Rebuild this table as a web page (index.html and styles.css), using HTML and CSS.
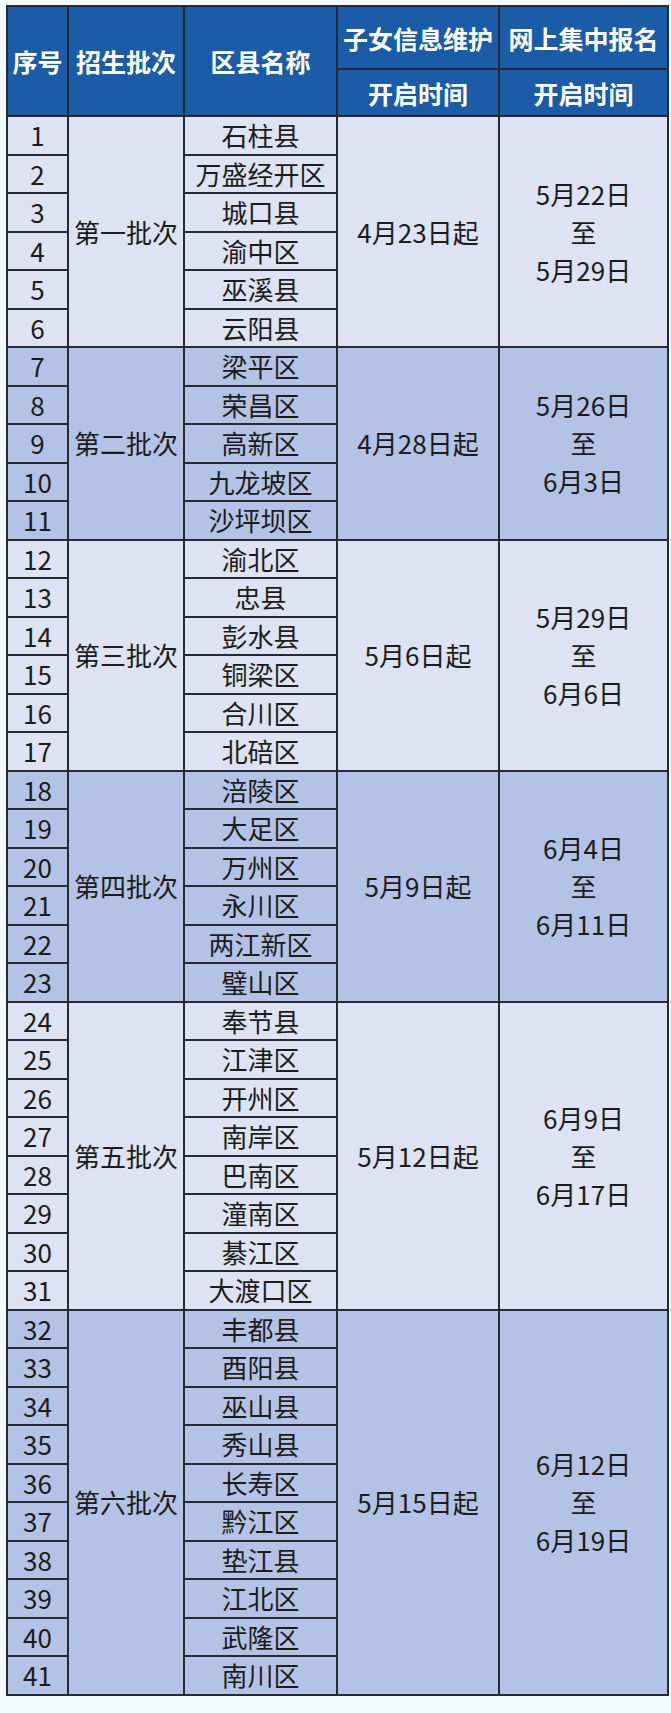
FILE: index.html
```html
<!DOCTYPE html>
<html lang="zh-CN">
<head>
<meta charset="utf-8">
<title>招生批次</title>
<link rel="stylesheet" href="styles.css">
</head>
<body>
<div class="page">
<table class="sched">
<colgroup>
<col class="c-no"><col class="c-batch"><col class="c-area"><col class="c-info"><col class="c-reg">
</colgroup>
<thead>
<tr class="h1">
<th rowspan="2">序号</th><th rowspan="2">招生批次</th><th rowspan="2">区县名称</th><th>子女信息维护</th><th>网上集中报名</th>
</tr>
<tr class="h2"><th>开启时间</th><th>开启时间</th></tr>
</thead>
<tbody class="light">
<tr><td>1</td><td rowspan="6">第一批次</td><td>石柱县</td><td rowspan="6">4月23日起</td><td rowspan="6">5月22日<br>至<br>5月29日</td></tr>
<tr><td>2</td><td>万盛经开区</td></tr>
<tr><td>3</td><td>城口县</td></tr>
<tr><td>4</td><td>渝中区</td></tr>
<tr><td>5</td><td>巫溪县</td></tr>
<tr><td>6</td><td>云阳县</td></tr>
</tbody>
<tbody class="dark">
<tr><td>7</td><td rowspan="5">第二批次</td><td>梁平区</td><td rowspan="5">4月28日起</td><td rowspan="5">5月26日<br>至<br>6月3日</td></tr>
<tr><td>8</td><td>荣昌区</td></tr>
<tr><td>9</td><td>高新区</td></tr>
<tr><td>10</td><td>九龙坡区</td></tr>
<tr><td>11</td><td>沙坪坝区</td></tr>
</tbody>
<tbody class="light">
<tr><td>12</td><td rowspan="6">第三批次</td><td>渝北区</td><td rowspan="6">5月6日起</td><td rowspan="6">5月29日<br>至<br>6月6日</td></tr>
<tr><td>13</td><td>忠县</td></tr>
<tr><td>14</td><td>彭水县</td></tr>
<tr><td>15</td><td>铜梁区</td></tr>
<tr><td>16</td><td>合川区</td></tr>
<tr><td>17</td><td>北碚区</td></tr>
</tbody>
<tbody class="dark">
<tr><td>18</td><td rowspan="6">第四批次</td><td>涪陵区</td><td rowspan="6">5月9日起</td><td rowspan="6">6月4日<br>至<br>6月11日</td></tr>
<tr><td>19</td><td>大足区</td></tr>
<tr><td>20</td><td>万州区</td></tr>
<tr><td>21</td><td>永川区</td></tr>
<tr><td>22</td><td>两江新区</td></tr>
<tr><td>23</td><td>璧山区</td></tr>
</tbody>
<tbody class="light">
<tr><td>24</td><td rowspan="8">第五批次</td><td>奉节县</td><td rowspan="8">5月12日起</td><td rowspan="8">6月9日<br>至<br>6月17日</td></tr>
<tr><td>25</td><td>江津区</td></tr>
<tr><td>26</td><td>开州区</td></tr>
<tr><td>27</td><td>南岸区</td></tr>
<tr><td>28</td><td>巴南区</td></tr>
<tr><td>29</td><td>潼南区</td></tr>
<tr><td>30</td><td>綦江区</td></tr>
<tr><td>31</td><td>大渡口区</td></tr>
</tbody>
<tbody class="dark">
<tr><td>32</td><td rowspan="10">第六批次</td><td>丰都县</td><td rowspan="10">5月15日起</td><td rowspan="10">6月12日<br>至<br>6月19日</td></tr>
<tr><td>33</td><td>酉阳县</td></tr>
<tr><td>34</td><td>巫山县</td></tr>
<tr><td>35</td><td>秀山县</td></tr>
<tr><td>36</td><td>长寿区</td></tr>
<tr><td>37</td><td>黔江区</td></tr>
<tr><td>38</td><td>垫江县</td></tr>
<tr><td>39</td><td>江北区</td></tr>
<tr><td>40</td><td>武隆区</td></tr>
<tr><td>41</td><td>南川区</td></tr>
</tbody>
</table>
</div>
</body>
</html>
```
FILE: styles.css
```css
html, body {
  margin: 0;
  padding: 0;
  background: #f3fbfd;
}
.page {
  padding: 5px 4px 20px 6px;
}
.sched {
  border-collapse: collapse;
  table-layout: fixed;
  width: 661px;
  font-family: "Noto Sans CJK SC", "Noto Sans", sans-serif;
  font-size: 26px;
  color: #1c1c1c;
  text-align: center;
}
.c-no { width: 61px; }
.c-batch { width: 116px; }
.c-area { width: 153px; }
.c-info { width: 162px; }
.c-reg { width: 169px; }
.sched th, .sched td {
  border: 2px solid #262a34;
  padding: 0;
  text-align: center;
  vertical-align: middle;
  white-space: nowrap;
  overflow: hidden;
}
.sched th {
  background: #1b5ca8;
  color: #ffffff;
  font-weight: bold;
  font-size: 25px;
  line-height: 30px;
}
.h1 th { height: 61px; }
.h2 th { height: 45px; }
.sched td {
  height: 36.5px;
  line-height: 36px;
}
.light td { background: #dde3f3; }
.dark td { background: #b4c3e5; }
.sched td[rowspan] {
  line-height: 38px;
}
```
